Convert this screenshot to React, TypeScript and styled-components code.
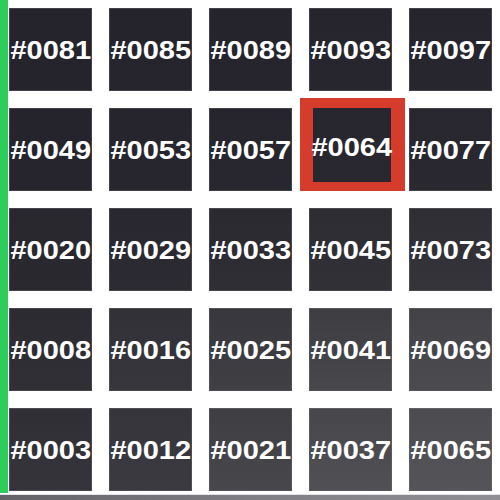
import React from "react";
import styled, { createGlobalStyle } from "styled-components";

const GlobalStyle = createGlobalStyle`
  html, body {
    margin: 0;
    padding: 0;
    background: #ffffff;
  }
  body {
    width: 500px;
    height: 500px;
    overflow: hidden;
    font-family: "Liberation Sans", Arial, sans-serif;
  }
`;

const Page = styled.div`
  display: flex;
  flex-direction: column;
  width: 500px;
  height: 500px;
`;

const Main = styled.div`
  display: flex;
  flex: 1;
  min-height: 0;
`;

const SideBar = styled.div`
  width: 8px;
  flex: none;
  background: #2ecc5a;
`;

const Grid = styled.div`
  display: grid;
  grid-template-columns: repeat(5, 83px);
  grid-template-rows: repeat(5, 83px);
  column-gap: 17px;
  row-gap: 17px;
  padding: 8px 0 0 1px;
`;

const Tile = styled.div<{ $top: string; $bottom: string; $selected?: boolean }>`
  display: flex;
  align-items: center;
  justify-content: center;
  background: linear-gradient(180deg, ${(p) => p.$top}, ${(p) => p.$bottom});
  box-sizing: border-box;
  border: 1px solid rgba(120, 120, 128, 0.35);
  ${(p) =>
    p.$selected &&
    `
    margin: -10px -13px 0 -9px;
    border-style: solid;
    border-color: #d63c2c;
    border-width: 10px 14px 9px 13px;
    padding-top: 4px;
  `}
`;

const Label = styled.span`
  color: #ffffff;
  font-weight: 700;
  font-size: 25px;
  line-height: 1;
  white-space: nowrap;
  transform: scaleX(1.16);
  margin-top: 1px;
`;

const Footer = styled.div`
  height: 5px;
  flex: none;
  margin-top: 1px;
  border-top: 1px solid #e2e2e6;
  background: linear-gradient(90deg, #626268, #7e7e84 50%, #8e8e94);
`;

const rows = [
  ["0081", "0085", "0089", "0093", "0097"],
  ["0049", "0053", "0057", "0064", "0077"],
  ["0020", "0029", "0033", "0045", "0073"],
  ["0008", "0016", "0025", "0041", "0069"],
  ["0003", "0012", "0021", "0037", "0065"],
];

// [top, bottom] colour of each tile, darker at the top left
const colors: [string, string][][] = [
  [
    ["#25242c", "#25242c"],
    ["#25242c", "#26252d"],
    ["#25242c", "#26252d"],
    ["#26252d", "#27262e"],
    ["#26252d", "#27262e"],
  ],
  [
    ["#25242c", "#26252d"],
    ["#26252d", "#27262e"],
    ["#26252d", "#28272f"],
    ["#27262e", "#29282f"],
    ["#28272f", "#2a2930"],
  ],
  [
    ["#28272e", "#2a2930"],
    ["#292830", "#2c2b32"],
    ["#2b2a31", "#2f2e35"],
    ["#2d2c33", "#323137"],
    ["#2f2e35", "#35343a"],
  ],
  [
    ["#2c2b31", "#302f35"],
    ["#323137", "#37363c"],
    ["#38373d", "#403f44"],
    ["#3e3d42", "#48474c"],
    ["#434247", "#4c4b50"],
  ],
  [
    ["#312f36", "#35343a"],
    ["#36353b", "#3b3a40"],
    ["#3f3e43", "#48474c"],
    ["#47464b", "#515055"],
    ["#4c4b50", "#555559"],
  ],
];

export default function App() {
  return (
    <Page>
      <GlobalStyle />
      <Main>
        <SideBar />
        <Grid>
          {rows.map((row, r) =>
            row.map((id, c) => (
              <Tile
                key={id}
                $top={colors[r][c][0]}
                $bottom={colors[r][c][1]}
                $selected={id === "0064"}
              >
                <Label>#{id}</Label>
              </Tile>
            ))
          )}
        </Grid>
      </Main>
      <Footer />
    </Page>
  );
}
